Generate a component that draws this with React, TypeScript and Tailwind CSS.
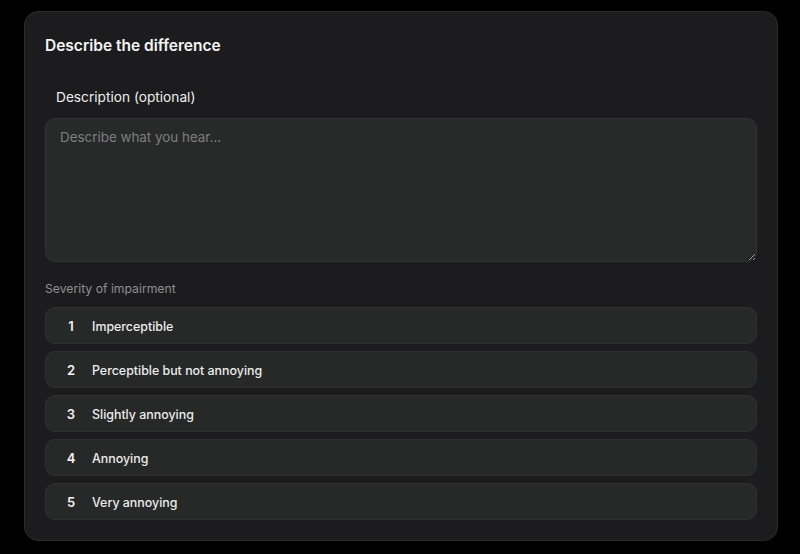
import React from "react";

const levels = [
  { n: 1, label: "Imperceptible" },
  { n: 2, label: "Perceptible but not annoying" },
  { n: 3, label: "Slightly annoying" },
  { n: 4, label: "Annoying" },
  { n: 5, label: "Very annoying" },
];

const App: React.FC = () => {
  const [text, setText] = React.useState("");
  const [selected, setSelected] = React.useState<number | null>(null);

  return (
    <div className="min-h-screen bg-black pt-[11px] pl-[24px] pr-[22px] pb-[13px] font-['Inter',sans-serif]">
      <div className="bg-[#1c1c1e] border border-[#2b2b2d] rounded-[14px] px-[20px] pt-[23px] pb-[20px]">
        <h2 className="text-[15.5px] leading-[22px] font-semibold text-[#f4f4f5]">
          Describe the difference
        </h2>

        <label className="block mt-[30px] ml-[11px] text-[13.7px] leading-[20px] text-[#ececec]">
          Description (optional)
        </label>
        <textarea
          value={text}
          onChange={(e) => setText(e.target.value)}
          placeholder="Describe what you hear..."
          className="block mt-[11px] w-full h-[144px] rounded-[10px] bg-[#282929] border border-[#323333] px-[14px] py-[8px] text-[13.4px] leading-[20px] text-[#e5e5e5] placeholder:text-[#7f7f7f] focus:outline-none"
        />

        <p className="mt-[18px] mb-[-1px] text-[12.2px] leading-[18px] text-[#8f8f8f]">
          Severity of impairment
        </p>

        <div className="mt-[10px] flex flex-col gap-[7px]">
          {levels.map((l) => (
            <button
              key={l.n}
              onClick={() => setSelected(l.n)}
              className={
                "flex items-center h-[37px] rounded-[10px] border pl-[17px] pt-[3px] text-left " +
                (selected === l.n
                  ? "bg-[#323434] border-[#4a4c4b]"
                  : "bg-[#272928] border-[#2f3130]")
              }
            >
              <span className="w-[16px] text-center text-[13px] font-semibold text-[#f4f4f5]">
                {l.n}
              </span>
              <span className="ml-[13px] text-[12.4px] font-medium text-[#ececec]">
                {l.label}
              </span>
            </button>
          ))}
        </div>
      </div>
    </div>
  );
};

export default App;
